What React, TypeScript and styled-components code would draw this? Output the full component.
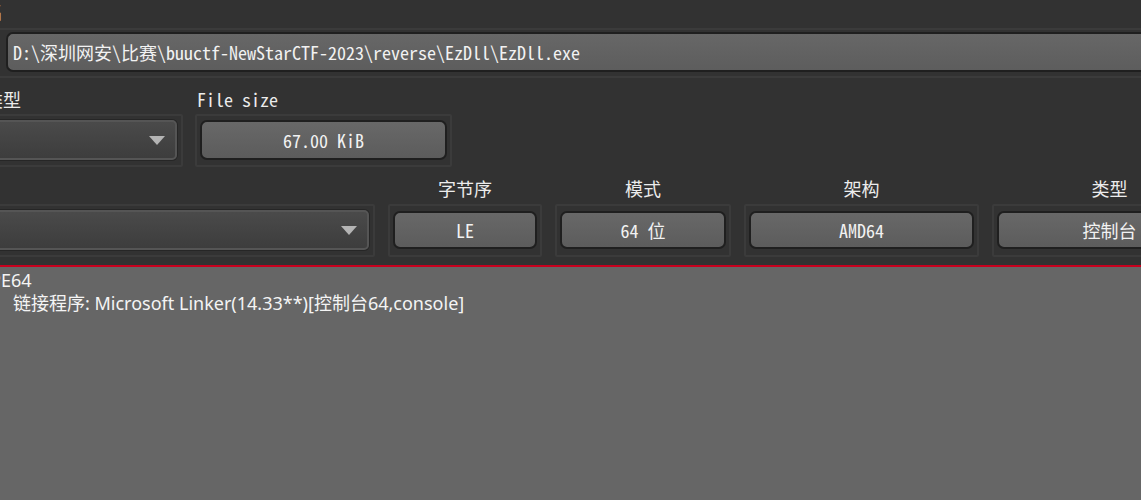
import React from "react";
import styled, { createGlobalStyle } from "styled-components";

const Global = createGlobalStyle`
  html, body { margin: 0; padding: 0; background: #323232; overflow: hidden; }
  body { width: 1141px; height: 500px; }
  #root { height: 500px; overflow: hidden; }
`;

const MONO = `"Noto Sans Mono CJK SC", "Liberation Mono", "Noto Sans CJK SC", monospace`;

const Page = styled.div`
  margin-left: -60px;
  width: 1400px;
  height: 500px;
  display: flex;
  flex-direction: column;
  font-family: ${MONO};
  font-size: 18px;
  color: #ececec;
`;

const TopLabel = styled.div`
  height: 28px;
  line-height: 22px;
  padding-left: 9px;
  white-space: nowrap;
`;

const WideFrame = styled.div`
  margin-left: 56px;
  border: 2px solid #3b3b3b;
  border-right: none;
  padding: 2px 0 4px 8px;
`;

const LineEdit = styled.div`
  height: 40px;
  box-sizing: border-box;
  border: 2px solid #1f1f1f;
  border-right: none;
  border-radius: 7px 0 0 7px;
  background: linear-gradient(#676767, #5d5d5d);
  display: flex;
  align-items: center;
  padding-left: 5px;
  color: #f2f2f2;
  white-space: nowrap;
`;

const Row = styled.div<{ $top: number; $left: number; $gap: number }>`
  display: flex;
  margin-top: ${(p) => p.$top}px;
  padding-left: ${(p) => p.$left}px;
  gap: ${(p) => p.$gap}px;
`;

const Column = styled.div<{ $w: number }>`
  width: ${(p) => p.$w}px;
  flex: none;
  display: flex;
  flex-direction: column;
  gap: 3px;
`;

const Label = styled.div<{ $center?: boolean; $lh: number }>`
  height: 22px;
  line-height: ${(p) => p.$lh}px;
  white-space: nowrap;
  padding-left: ${(p) => (p.$center ? 0 : 2)}px;
  text-align: ${(p) => (p.$center ? "center" : "left")};
`;

const Frame = styled.div<{ $pad: string }>`
  box-sizing: border-box;
  height: 53px;
  border: 2px solid #3b3b3b;
  border-radius: 2px;
  padding: ${(p) => p.$pad};
`;

const Combo = styled.div`
  height: 40px;
  box-sizing: border-box;
  border: 2px solid #555555;
  border-radius: 5px;
  box-shadow: 0 0 0 1px #262626;
  background: linear-gradient(#4a4a4a, #3d3d3d);
  display: flex;
  align-items: center;
  justify-content: flex-end;
  padding-right: 10px;
`;

const Arrow = styled.div`
  width: 0;
  height: 0;
  border-left: 8px solid transparent;
  border-right: 8px solid transparent;
  border-top: 9px solid #b4b4b4;
`;

const ValueButton = styled.div<{ $h: number }>`
  height: ${(p) => p.$h}px;
  box-sizing: border-box;
  border: 2px solid #1f1f1f;
  border-radius: 7px;
  background: linear-gradient(#686868, #5c5c5c);
  display: flex;
  align-items: center;
  justify-content: center;
  color: #f2f2f2;
  white-space: nowrap;
`;

const Results = styled.div`
  flex: 1;
  margin-top: 8px;
  border-top: 2px solid #c8001e;
  background: #666666;
  padding: 2px 0 0 50px;
  font-family: "Noto Sans", "Noto Sans CJK SC", sans-serif;
  font-size: 18px;
  line-height: 23px;
  color: #f4f4f4;
`;

const ResultLine = styled.div<{ $indent?: number }>`
  padding-left: ${(p) => p.$indent ?? 0}px;
  white-space: nowrap;
`;

const infoCols = [
  { label: "字节序", value: "LE", w: 154 },
  { label: "模式", value: "64 位", w: 176 },
  { label: "架构", value: "AMD64", w: 235 },
  { label: "类型", value: "控制台", w: 235 },
];

export default function App() {
  return (
    <>
      <Global />
      <Page>
        <TopLabel>文件名</TopLabel>
        <WideFrame>
          <LineEdit>D:\深圳网安\比赛\buuctf-NewStarCTF-2023\reverse\EzDll\EzDll.exe</LineEdit>
        </WideFrame>

        <Row $top={11} $left={43} $gap={12}>
          <Column $w={200}>
            <Label $lh={20}>类型</Label>
            <Frame $pad="4px 4px 5px 3px">
              <Combo>
                <Arrow />
              </Combo>
            </Frame>
          </Column>
          <Column $w={257}>
            <Label $lh={20}>File size</Label>
            <Frame $pad="4px 3px 5px 3px">
              <ValueButton $h={40}>67.00 KiB</ValueButton>
            </Frame>
          </Column>
        </Row>

        <Row $top={12} $left={40} $gap={13}>
          <Column $w={395}>
            <Label $center $lh={19}> </Label>
            <Frame $pad="4px 4px 5px 3px">
              <Combo>
                <Arrow />
              </Combo>
            </Frame>
          </Column>
          {infoCols.map((c) => (
            <Column key={c.label} $w={c.w}>
              <Label $center $lh={19}>{c.label}</Label>
              <Frame $pad="5px 3px 6px 3px">
                <ValueButton $h={38}>{c.value}</ValueButton>
              </Frame>
            </Column>
          ))}
        </Row>

        <Results>
          <ResultLine>PE64</ResultLine>
          <ResultLine $indent={23}>链接程序: Microsoft Linker(14.33**)[控制台64,console]</ResultLine>
        </Results>
      </Page>
    </>
  );
}
